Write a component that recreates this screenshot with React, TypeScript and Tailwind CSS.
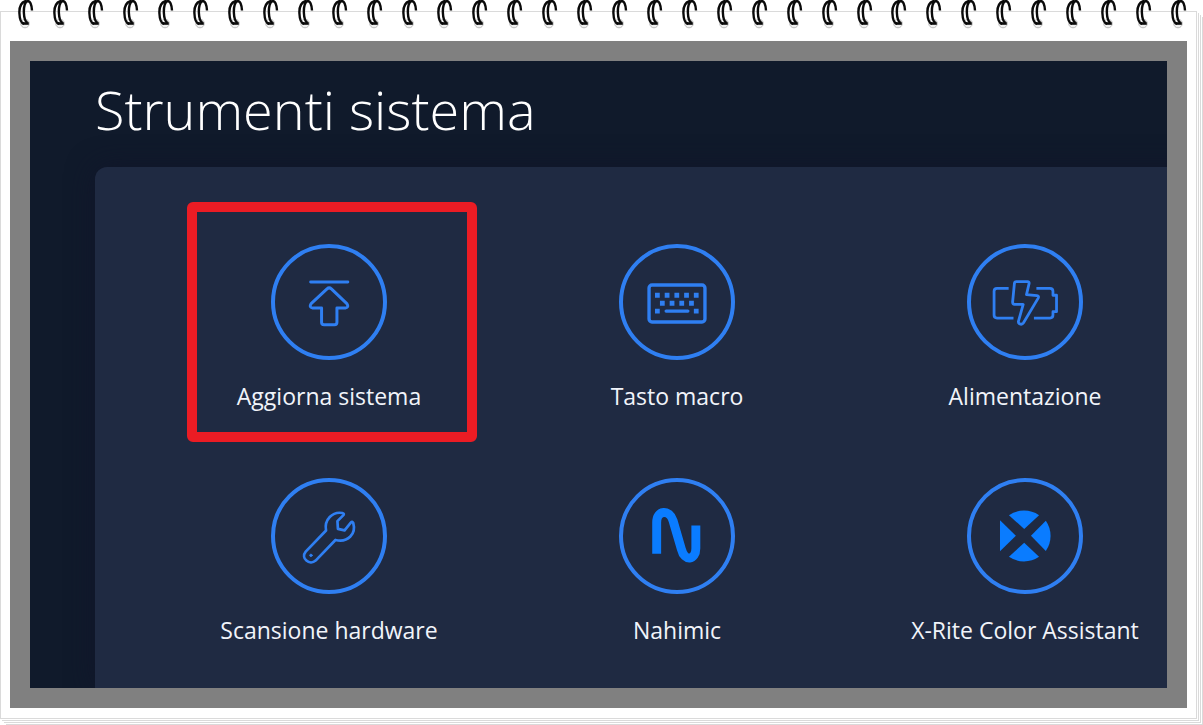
import type { ReactNode } from "react";

const RING_COUNT = 34;

type Tool = {
  label: string;
  icon: ReactNode;
  highlighted?: boolean;
};

const tools: Tool[] = [
  {
    label: "Aggiorna sistema",
    highlighted: true,
    icon: (
      <g strokeWidth="3">
        <path d="M40 38.3H77.5" />
        <path d="M56.5 45.2q2.2-2 4.4 0L76.5 60.2q2.5 3.8-1.5 4.3h-8.5V79q0 2.5-2.5 2.5h-10.5q-2.5 0-2.5-2.5V64.5h-9q-4-.5-1.5-4.3z" />
      </g>
    ),
  },
  {
    label: "Tasto macro",
    icon: (
      <>
        <rect x="30.3" y="41.3" width="56.4" height="37.4" rx="3" strokeWidth="3.4" />
        <g strokeWidth="5" strokeLinecap="butt">
          <path d="M36.3 51.7h4.8m5 0h4.8m5 0h4.8m5 0h4.8m5 0h4.8" />
          <path d="M41.3 59.7h4.8m5 0h4.8m5 0h4.8m5 0h4.8" />
          <path d="M36.3 67.7h4.8m34.4 0h4.8" />
        </g>
        <path d="M47.5 67.7h22" strokeWidth="3.2" />
      </>
    ),
  },
  {
    label: "Alimentazione",
    icon: (
      <g strokeWidth="2.8">
        <path d="M42 44.7H30.3q-3 0-3 3V71.7q0 3 3 3h16.6" strokeLinecap="butt" />
        <path d="M70 44.7H83.7q3 0 3 3v4h3.6v16.6h-3.6v3.4q0 3-3 3H67.5" strokeLinecap="butt" />
        <path d="M49.8 38H61q2 0 1.6 2L60 51l10.5 1q2.4.4 1.3 2.6L57 79.5q-1.5 2.3-4 1-1.6-1-1-3L56.7 61H48q-2-.2-2-2.5L47.8 40q.2-2 2-2z" />
      </g>
    ),
  },
  {
    label: "Scansione hardware",
    icon: (
      <>
        <path
          strokeWidth="2.7"
          d="M72 35.3q2.5.5.8 2.4L67 43.5l.5 7.8 6.7 1.5L80.5 45q1.5-1.800 2.500.5C86 56 78 65.500 65 62.500L45 83.300C39 88.500 29.500 81 35 74.300L55.500 53C53.500 42 62 33.500 72 35.300z"
        />
        <circle cx="40.3" cy="78" r="1.2" fill="currentColor" strokeWidth="1" />
      </>
    ),
  },
  {
    label: "Nahimic",
    icon: (
      <path
        className="text-[#0a7cff]"
        stroke="currentColor"
        strokeWidth="9"
        strokeLinecap="butt"
        d="M38 76.5V45C38 32 51 31.5 54.5 43l8.5 29C66 84.5 77.5 83 77.5 71V48"
      />
    ),
  },
  {
    label: "X-Rite Color Assistant",
    icon: (
      <g className="text-[#0a7cff]" fill="currentColor" stroke="none">
        <path d="M42.3 37.5A27 27 0 0 1 72.7 37.5L57.7 51.5z" />
        <path d="M79.5 43A27 27 0 0 1 79.5 73.7L64.5 58.3z" />
        <path d="M42.3 79.5A27 27 0 0 0 72.7 79.5L57.7 65.3z" />
        <path d="M33.3 42.7V73.9L49.3 58.3z" />
      </g>
    ),
  },
];

function Ring() {
  return (
    <svg className="h-[29px] w-4 shrink-0" viewBox="0 0 16 29" fill="none" aria-hidden="true">
      <circle cx="7" cy="23.5" r="4.3" fill="#f1f1f1" stroke="#bdbdbd" />
      <path d="M8.5.8C3 2 1.2 7 1.4 13c.2 6 2 10.300 4.600 10.800" stroke="#0a0a0a" strokeWidth="2.4" />
      <path d="M14 10.500C13.600 4 12 .8 9.500 1 7 1.500 5.600 7 5.900 13c.2 5 1.300 8.500 3.600 10" stroke="#0a0a0a" strokeWidth="2.4" />
      <path d="M4.500 23.500h6.300" stroke="#0a0a0a" strokeWidth="2.600" />
    </svg>
  );
}

function ToolTile({ label, icon, highlighted }: Tool) {
  return (
    <div className="relative flex justify-center">
      <button type="button" className="flex flex-col items-center gap-5">
        <span className="size-[116px] rounded-full border-4 border-[#2f7ff2] text-[#2f7ff2]">
          <svg
            className="-m-1 size-[116px]"
            viewBox="0 0 117 117"
            fill="none"
            stroke="currentColor"
            strokeLinecap="round"
            strokeLinejoin="round"
            aria-hidden="true"
          >
            {icon}
          </svg>
        </span>
        <span className="text-[23px] leading-8 whitespace-nowrap text-[#f1f4fa]">{label}</span>
      </button>
      {highlighted && (
        <div className="pointer-events-none absolute -top-[42px] right-[26px] -bottom-[30px] left-8 rounded-md border-10 border-[#eb1c24]" />
      )}
    </div>
  );
}

export default function App() {
  return (
    <div className="relative overflow-hidden bg-white pt-[11px] pr-1.5 pb-1.5 font-['Open_Sans','Noto_Sans',sans-serif]">
      <div className="absolute inset-x-0 top-0 flex justify-between pr-4 pl-[18px]">
        {Array.from({ length: RING_COUNT }, (_, i) => (
          <Ring key={i} />
        ))}
      </div>

      {/* Top sheet, with the edges of three more below it */}
      <div className="border border-[#dadada] px-[9px] pt-[29px] pb-2.5 shadow-[1px_1px_0_#fff,2px_2px_0_#dadada,3px_3px_0_#fff,4px_4px_0_#dadada,5px_5px_0_#fff,6px_6px_0_#dadada]">
        <div className="border-20 border-[#808080]">
          <main className="overflow-hidden bg-[#101a2b] pl-[65px] text-white">
            <h1 className="pt-2.5 pb-5 text-[54px] leading-[76px] font-light whitespace-nowrap">
              Strumenti sistema
            </h1>
            <section className="-mr-8 rounded-tl-xl bg-[#1f2a42] pt-[77px] pb-[42px] pl-[60px] shadow-[0_0_28px_#11152a]">
              <div className="grid grid-cols-3 gap-y-[66px]">
                {tools.map((tool) => (
                  <ToolTile key={tool.label} {...tool} />
                ))}
              </div>
            </section>
          </main>
        </div>
      </div>
    </div>
  );
}
